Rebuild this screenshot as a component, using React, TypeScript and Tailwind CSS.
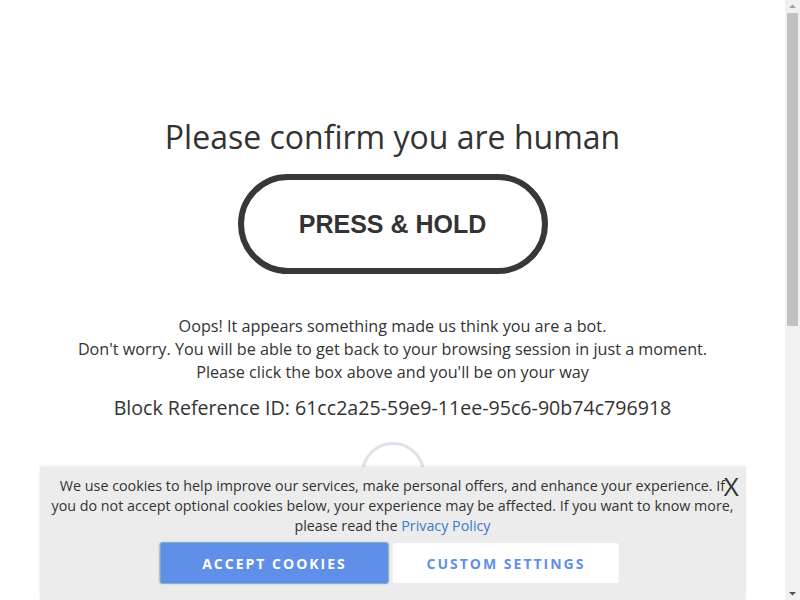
import React from 'react';

const Scrollbar: React.FC = () => (
  <div className="w-[15px] h-full bg-[#f1f1f1] flex flex-col items-center">
    <svg width="15" height="13" viewBox="0 0 15 13" className="shrink-0">
      <path d="M4 8 L7.5 4.5 L11 8 Z" fill="#a3a3a3" />
    </svg>
    <div className="w-[11px] h-[313px] bg-[#c1c1c1]" />
    <div className="flex-1" />
    <svg width="15" height="13" viewBox="0 0 15 13" className="shrink-0">
      <path d="M4 5 L7.5 8.5 L11 5 Z" fill="#505050" />
    </svg>
  </div>
);

const App: React.FC = () => {
  return (
    <div className="flex h-screen overflow-hidden bg-white text-[#333] font-['Open_Sans',sans-serif]">
      <div className="relative flex-1 h-full overflow-hidden">
        {/* Challenge */}
        <div className="flex flex-col items-center pt-[115px] text-center">
          <h1 className="text-[32px] leading-[44px] font-normal">Please confirm you are human</h1>
          <button className="mt-[15px] w-[310px] h-[100px] rounded-full border-[6px] border-[#383838] bg-white pt-[2px] font-['Liberation_Sans',Arial,sans-serif] text-[25px] font-bold text-[#333]">
            PRESS &amp; HOLD
          </button>
          <div className="mt-[41px] text-[16.2px] leading-[23px]">
            <p>Oops! It appears something made us think you are a bot.</p>
            <p>Don't worry. You will be able to get back to your browsing session in just a moment.</p>
            <p>Please click the box above and you'll be on your way</p>
          </div>
          <p className="mt-[10px] text-[19.6px] leading-[28px]">Block Reference ID: 61cc2a25-59e9-11ee-95c6-90b74c796918</p>
          <div className="mt-[20px] w-[64px] h-[64px] rounded-full border-[3px] border-[#dfe2ec]" />
        </div>

        {/* Cookie banner */}
        <div className="absolute bottom-0 left-1/2 -translate-x-1/2 w-[90%] bg-[#ececec] pt-[9px] pb-[16px] px-[8px] text-center shadow-[0_-1px_3px_rgba(0,0,0,0.08)]">
          <button className="absolute right-[7px] top-[4px] text-[26px] leading-[30px] text-[#333] font-['Open_Sans',sans-serif]">X</button>
          <p className="text-[14.3px] leading-[20px] text-[#333]">
            We use cookies to help improve our services, make personal offers, and enhance your experience. If you do not accept optional cookies below, your experience may be affected. If you want to know more, please read the{' '}
            <a className="text-[#3b7bc8]">Privacy Policy</a>
          </p>
          <div className="mt-[6px] pr-[6px] flex justify-center gap-[4px]">
            <button className="w-[229px] h-[42px] rounded-[3px] border border-[#7fb0c8] bg-[#5f8fe8] text-white text-[14px] font-bold tracking-[2px] shadow-[0_0_2px_rgba(0,0,0,0.2)]">
              ACCEPT COOKIES
            </button>
            <button className="w-[226px] h-[40px] mt-[1px] rounded-[3px] bg-white text-[#5f8fe8] text-[14px] font-bold tracking-[2px]">
              CUSTOM SETTINGS
            </button>
          </div>
        </div>
      </div>
      <Scrollbar />
    </div>
  );
};

export default App;
